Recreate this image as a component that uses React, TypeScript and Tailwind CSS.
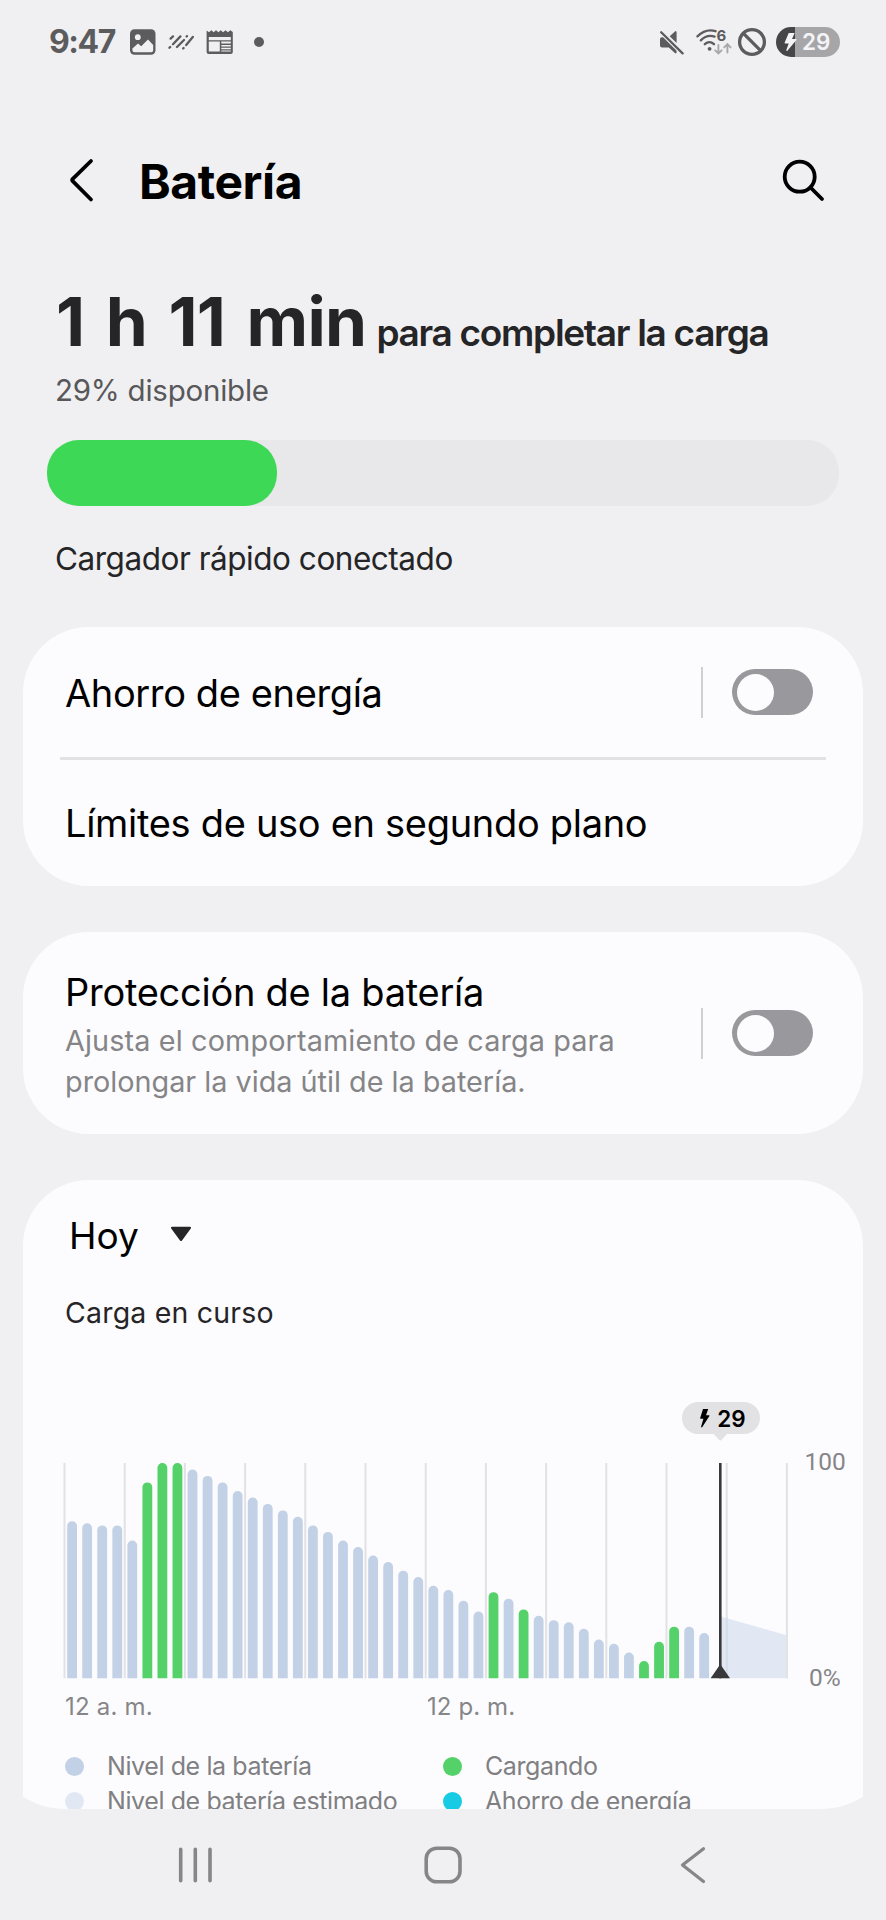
import React, { useState } from "react";

type Sample = { level: number; charging?: boolean };

const samples: Sample[] = [
  { level: 73 },
  { level: 72 },
  { level: 71 },
  { level: 71 },
  { level: 64 },
  { level: 91, charging: true },
  { level: 100, charging: true },
  { level: 100, charging: true },
  ...[97, 94, 91, 87, 84, 81, 78, 75, 71, 68, 64, 61, 57, 54, 50, 47, 43, 41, 36, 31].map(
    (level) => ({ level })
  ),
  { level: 40, charging: true },
  { level: 37 },
  { level: 32, charging: true },
  ...[29, 27, 26, 23, 18, 16, 12].map((level) => ({ level })),
  { level: 8, charging: true },
  { level: 17, charging: true },
  { level: 24, charging: true },
  { level: 24 },
  { level: 21 },
];

const legend = [
  { label: "Nivel de la batería", dot: "bg-[#c2d1e6]" },
  { label: "Cargando", dot: "bg-[#54d169]" },
  { label: "Nivel de batería estimado", dot: "bg-[#e1e8f3]" },
  { label: "Ahorro de energía", dot: "bg-[#17cbe4]" },
];

const StatusBar = () => (
  <div className="flex h-[84px] items-center pl-[49px] pr-[46px] text-[#5c5c5e]">
    <span className="w-[81px] text-[32px] font-bold leading-none tracking-[-0.045em]">9:47</span>
    <svg className="h-[26px] w-[26px]" viewBox="0 0 26 26">
      <rect width="25.5" height="25.5" y="0.2" rx="4.5" fill="currentColor" />
      <circle cx="7.8" cy="8.2" r="2.9" fill="#f0f0f2" />
      <path d="M2.4 19.5 8 14.5l3.2 2.8 6.8-6.8 5.2 5.6v5.2a2 2 0 0 1-2 2H4.4a2 2 0 0 1-2-2z" fill="#f0f0f2" />
    </svg>
    <svg
      className="ml-[12px] h-[18px] w-[26px]"
      viewBox="0 0 26 18"
      fill="none"
      stroke="currentColor"
      strokeWidth="2.3"
      strokeLinecap="round"
    >
      <path d="M2.6 5.6 5 3.4M1.4 14.8l.8-.8M5 11.2l7.4-7.8M9 14l7-7M18.6 3.5l.4-.4M15.2 15.4l.4-.4M18.2 12l6.6-8" />
    </svg>
    <svg className="ml-[12px] h-[26px] w-[28px]" viewBox="0 0 28 26">
      <path
        d="M.6 1.5 3 3.2 5.3 1.2 7.7 3.2 10 1.2l2.4 2L14.7 1.2l2.4 2 2.4-2 2.4 2 2.4-2L26.8 3v20a2 2 0 0 1-2 2H2.6a2 2 0 0 1-2-2z"
        fill="currentColor"
      />
      <path
        d="M2.8 8h22v3.2h-22zM2.8 12.6h11v10h-11zM15.3 12.6h9.5v2h-9.5zM15.3 16h9.5v1.6h-9.5zM15.3 18.7h9.5v1.6h-9.5zM15.3 21.4h9.5v1.2h-9.5z"
        fill="#f0f0f2"
      />
    </svg>
    <span className="ml-[20px] h-[10px] w-[10px] rounded-full bg-[#5c5c5e]" />

    <div className="ml-auto flex items-center">
      <svg className="h-[26px] w-[26px]" viewBox="0 0 26 26">
        <path
          d="M1 10.2a2 2 0 0 1 2-2h4.6L17.6 18v5.4a1 1 0 0 1-1.7.7l-6.1-5.6H3a2 2 0 0 1-2-2zM10.7 7.3l5.2-4.9a1 1 0 0 1 1.7.7v11z"
          fill="currentColor"
        />
        <path d="M2.2 3.2 23.6 24.4" stroke="#f0f0f2" strokeWidth="4.6" />
        <path d="M2.2 3.2 23.6 24.4" stroke="currentColor" strokeWidth="2.3" strokeLinecap="round" />
      </svg>
      <svg className="ml-[10px] h-[36px] w-[38px]" viewBox="0 -4 38 36" fill="none" stroke="currentColor">
        <g strokeWidth="2.3" strokeLinecap="round">
          <path d="M2.4 8.4Q10.8.2 20.6 3.2" />
          <path d="M5.8 12.4Q12 6 19.6 8.6" />
          <path d="M9.8 16.2Q14.4 12 19 16.2" />
        </g>
        <circle cx="14.6" cy="20.8" r="1.9" fill="currentColor" stroke="none" />
        <text x="21.6" y="12.8" fontSize="15" fontWeight="700" fill="currentColor" stroke="none">
          6
        </text>
        <path
          d="M23.4 17v8.2M20.2 22.3l3.2 3.2 3.2-3.2M32.4 24.6v-8M29.2 19.4l3.2-3.2 3.2 3.2"
          stroke="#a8a8aa"
          strokeWidth="1.9"
          strokeLinecap="round"
        />
      </svg>
      <svg className="ml-[4px] h-[30px] w-[30px]" viewBox="0 0 30 30" fill="none" stroke="currentColor" strokeWidth="3.3">
        <circle cx="15" cy="15" r="12.4" />
        <path d="M6.4 6.4 23.6 23.6" />
      </svg>
      <div className="ml-[9px] flex h-[30px] w-[64px] items-center rounded-full bg-[linear-gradient(90deg,#464648_19px,#a6a6a8_19px)] pl-[8px] text-[#f4f4f6]">
        <BoltIcon className="h-[18px] w-[13px]" />
        <span className="ml-[5px] text-[22.5px] font-semibold leading-none">29</span>
      </div>
    </div>
  </div>
);

const BoltIcon = ({ className }: { className?: string }) => (
  <svg className={className} viewBox="0 0 11 18" preserveAspectRatio="none" fill="currentColor">
    <path d="M4 0h5L6.8 6h3.4a.5.5 0 0 1 .4.8L2.7 18l-.9-.4L4 10.6H1a.6.6 0 0 1-.5-.8z" />
  </svg>
);

const Toggle = ({ on, onClick }: { on: boolean; onClick: () => void }) => (
  <div className="flex h-[51px] items-center border-l-2 border-[#d0d0d3] pl-[29px]">
    <button
      role="switch"
      aria-checked={on}
      onClick={onClick}
      className={`flex h-[46px] w-[81px] items-center rounded-full px-[5px] ${
        on ? "justify-end bg-[#3ed857]" : "justify-start bg-[#99989d]"
      }`}
    >
      <span className="h-[37px] w-[37px] rounded-full bg-[#fcfcfe]" />
    </button>
  </div>
);

const CHART_TOP = 73;
const CHART_BOTTOM = 288.3;
const UNIT = (CHART_BOTTOM - CHART_TOP) / 100;

const bar = (x: number, level: number) => {
  const top = CHART_BOTTOM - level * UNIT;
  return `M${x} ${CHART_BOTTOM}V${top + 4.9}a4.9 4.9 0 0 1 9.8 0V${CHART_BOTTOM}z`;
};

const BatteryChart = () => (
  <svg className="block h-[340px] w-[840px]" viewBox="0 0 840 340">
    {/* one grid line every two hours */}
    {Array.from({ length: 13 }, (_, i) => (
      <rect key={i} x={40.5 + i * 60.2} y={CHART_TOP} width="2" height={CHART_BOTTOM - CHART_TOP} fill="#e2e2e4" />
    ))}

    <path d={`M697.5 226.5 763 245V${CHART_BOTTOM}H697.5z`} fill="#e1e8f3" />
    <rect x="702.8" y="228" width="2" height={CHART_BOTTOM - 228} fill="#d5dcea" />

    {samples.map((s, i) => (
      <path key={i} d={bar(44.2 + i * 15.05, s.level)} fill={s.charging ? "#54d169" : "#c2d1e6"} />
    ))}

    <rect x="696" y={CHART_TOP} width="2.6" height={CHART_BOTTOM - CHART_TOP} fill="#38383a" />
    <path d={`M697.3 274.3 707 ${CHART_BOTTOM}H687.6z`} fill="#38383a" />

    <path d="M675 12h46a16 16 0 0 1 0 32h-17l-5.6 6a1.5 1.5 0 0 1-2.2 0l-5.6-6H675a16 16 0 0 1 0-32z" fill="#e2e2e4" />
    <path d="M680 19h5.2L683 25.2h3a.5.5 0 0 1 .4.8L679 37.5l-1-.4 2.4-8.4h-2.7a.6.6 0 0 1-.5-.8z" fill="#000" />
    <text x="694.3" y="36.8" fontSize="22.5" fontWeight="600" fill="#000">
      29
    </text>

    <g fill="#868688">
      <text className="font-[Roboto]" x="781.5" y="80" fontSize="24.5">
        100
      </text>
      <text className="font-[Roboto]" x="786" y="296" fontSize="24.5">
        0%
      </text>
      <text x="42" y="324.7" fontSize="24" letterSpacing="0.2">
        12 a. m.
      </text>
      <text x="404" y="324.7" fontSize="24" letterSpacing="0.1">
        12 p. m.
      </text>
    </g>
  </svg>
);

const NavBar = () => (
  <div className="flex h-[111px] items-center pt-px text-[#868688]">
    <svg className="ml-[177px] h-[40px] w-[37px]" viewBox="0 0 37 40" stroke="currentColor" strokeWidth="3.6" strokeLinecap="round">
      <path d="M3.7 4.2v31.6M18.3 4.2v31.6M33 4.2v31.6" />
    </svg>
    <svg className="ml-[209px] h-[40px] w-[40px]" viewBox="0 0 40 40" fill="none" stroke="currentColor" strokeWidth="3.6">
      <rect x="3.2" y="3.2" width="33.8" height="33.6" rx="10.5" />
    </svg>
    <svg
      className="ml-[214px] h-[40px] w-[30px]"
      viewBox="0 0 30 40"
      fill="none"
      stroke="currentColor"
      strokeWidth="3.2"
      strokeLinecap="round"
      strokeLinejoin="round"
    >
      <path d="M26.5 3.800 5.500 20l21 16.500" />
    </svg>
  </div>
);

export default function App() {
  const [powerSaving, setPowerSaving] = useState(false);
  const [protection, setProtection] = useState(false);

  return (
    <div className="flex h-[1920px] w-[886px] flex-col overflow-hidden bg-[#f0f0f2] font-[Inter,sans-serif] text-black">
      <StatusBar />

      <header className="flex h-[192px] items-center pl-[64px] pr-[59px]">
        <svg
          className="h-[48px] w-[34px]"
          viewBox="0 0 34 48"
          fill="none"
          stroke="currentColor"
          strokeWidth="3.8"
          strokeLinecap="round"
          strokeLinejoin="round"
        >
          <path d="M27 5 8.500 23.200a1.200 1.200 0 0 0 0 1.700L27 43.500" />
        </svg>
        <h1 className="ml-[41px] pt-[3px] text-[48px] font-bold leading-[56px] tracking-[-0.009em]">Batería</h1>
        <svg
          className="ml-auto h-[48px] w-[48px]"
          viewBox="0 0 48 48"
          fill="none"
          stroke="currentColor"
          strokeWidth="3.8"
          strokeLinecap="round"
        >
          <circle cx="20.7" cy="20.7" r="15" />
          <path d="M31.5 31.5 43 43" />
        </svg>
      </header>

      <section className="flex flex-col px-[47px] pt-[6px]">
        <div className="flex h-[80px] items-baseline pl-[9px] text-[#252527]">
          <span className="text-[67.5px] font-bold leading-[80px] tracking-[-0.01em] [word-spacing:6px]">1 h 11 min</span>
          <span className="ml-[10px] text-[37px] font-semibold leading-[44px] tracking-[-0.035em]">
            para completar la carga
          </span>
        </div>
        <p className="mt-[6px] pl-[8px] text-[29.5px] leading-[44px] tracking-[-0.008em] text-[#58585a]">29% disponible</p>
        <div className="mt-[28px] h-[66px] w-[792px] rounded-[32px] bg-[#e8e8ea]">
          <div className="h-full rounded-[32px] bg-[#3ed857]" style={{ width: "29%" }} />
        </div>
        <p className="mt-[31px] pl-[8px] text-[31.5px] leading-[44px] tracking-[-0.015em] text-[#252527]">
          Cargador rápido conectado
        </p>
      </section>

      <main className="mt-[46px] flex min-h-0 flex-1 flex-col gap-[46px] px-[23px]">
        <section className="flex h-[259px] shrink-0 flex-col rounded-[66px] bg-[#fcfcfe]">
          <div className="flex h-[130px] items-center justify-between pl-[42px] pr-[50px]">
            <span className="pt-[2px] text-[38px] leading-[48px] tracking-[-0.01em]">Ahorro de energía</span>
            <Toggle on={powerSaving} onClick={() => setPowerSaving(!powerSaving)} />
          </div>
          <div className="mx-[37px] h-[2.5px] bg-[#e2e2e4]" />
          <div className="flex flex-1 items-center pl-[42px]">
            <span className="text-[38px] leading-[48px] tracking-[-0.008em]">Límites de uso en segundo plano</span>
          </div>
        </section>

        <section className="flex h-[202px] shrink-0 items-center justify-between rounded-[66px] bg-[#fcfcfe] pl-[42px] pr-[50px]">
          <div className="pt-[4px]">
            <h2 className="text-[38px] leading-[48px] tracking-[-0.007em]">Protección de la batería</h2>
            <p className="mt-[5px] text-[28.8px] leading-[40.7px] tracking-[0.0045em] text-[#858587]">
              Ajusta el comportamiento de carga para
              <br />
              <span className="tracking-normal">prolongar la vida útil de la batería.</span>
            </p>
          </div>
          <Toggle on={protection} onClick={() => setProtection(!protection)} />
        </section>

        <section className="flex min-h-0 flex-1 flex-col rounded-t-[66px] bg-[#fcfcfe] pt-[32px] [clip-path:inset(0_-36px_0_-36px_round_0_0_78px_78px)]">
          <button className="flex items-center pl-[46px] text-left">
            <span className="text-[37px] leading-[48px]">Hoy</span>
            <svg className="mb-[5px] ml-[31px] h-[16px] w-[22px]" viewBox="0 0 22 16" fill="#252527">
              <path d="M2 .8h18a1 1 0 0 1 .8 1.6l-8.8 12a1.3 1.3 0 0 1-2 0l-8.8-12A1 1 0 0 1 2 .8z" />
            </svg>
          </button>
          <p className="mt-[33px] pl-[42px] text-[28.5px] leading-[40px] tracking-[0.007em] text-[#252527]">Carga en curso</p>
          <div className="mt-[57px]">
            <BatteryChart />
          </div>
          <div className="mt-[19px] grid shrink-0 grid-cols-[378px_1fr] pl-[42px] text-[25px] leading-[35.3px] tracking-[-0.016em] text-[#808082]">
            {legend.map(({ label, dot }) => (
              <div key={label} className="flex items-center gap-[23px]">
                <span className={`h-[19px] w-[19px] rounded-full ${dot}`} />
                {label}
              </div>
            ))}
          </div>
        </section>
      </main>

      <NavBar />
    </div>
  );
}
